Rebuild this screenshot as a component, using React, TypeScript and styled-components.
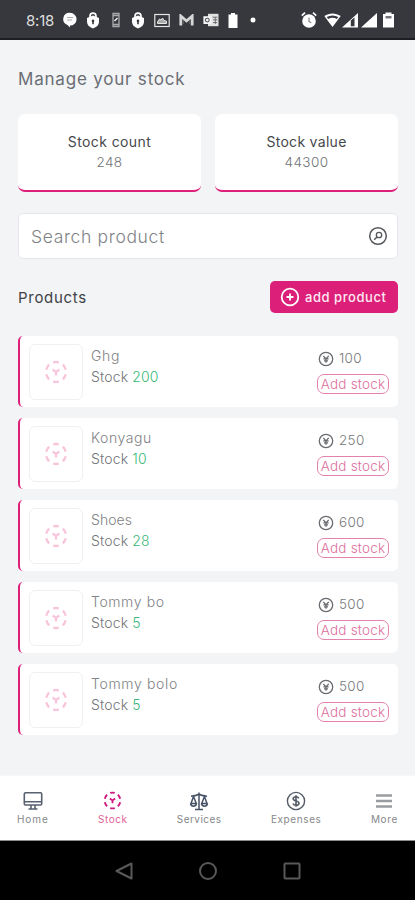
import React from "react";
import styled, { createGlobalStyle } from "styled-components";

const GlobalStyle = createGlobalStyle`
  * { box-sizing: border-box; }
  body { margin: 0; background: #f2f4f7; }
  body, button, input { font-family: Inter, "Open Sans", sans-serif; }
`;

const PINK = "#dc1f78";

const Screen = styled.div`
  width: 415px;
  height: 900px;
  display: flex;
  flex-direction: column;
  background: #f2f4f6;
  overflow: hidden;
`;

const Text = styled.span<{ $size: number; $color: string; $weight?: number; $track?: number; $line?: number }>`
  font-size: ${(p) => p.$size}px;
  color: ${(p) => p.$color};
  font-weight: ${(p) => p.$weight ?? 400};
  letter-spacing: ${(p) => p.$track ?? 0}px;
  line-height: ${(p) => p.$line ?? 21}px;
  white-space: nowrap;
`;

const StatusBar = styled.header`
  height: 40px;
  flex: none;
  display: flex;
  justify-content: space-between;
  padding: 0 20px 0 26px;
  background: #37383d;
  border-bottom: 2px solid #1d1d22;
`;

const StatusGroup = styled.div<{ $gap: number }>`
  display: flex;
  align-items: center;
  gap: ${(p) => p.$gap}px;
  padding-top: 2px;
  svg { display: block; }
`;

const Main = styled.main`
  flex: 1;
  display: flex;
  flex-direction: column;
  padding: 28px 17px 0 18px;
`;

const Summary = styled.section`
  display: grid;
  grid-template-columns: 1fr 1fr;
  gap: 14px;
  margin-top: 24px;
`;

const SummaryCard = styled.div`
  height: 78px;
  display: flex;
  flex-direction: column;
  align-items: center;
  padding-top: 17px;
  background: #fff;
  border-radius: 7px;
  border-bottom: 2px solid ${PINK};
`;

const SearchBox = styled.label`
  height: 46px;
  margin-top: 21px;
  padding: 0 9px 0 12px;
  display: flex;
  align-items: center;
  justify-content: space-between;
  background: #fff;
  border: 1px solid #e4e6e9;
  border-radius: 5px;
`;

const ListHeader = styled.div`
  display: flex;
  align-items: center;
  justify-content: space-between;
  margin-top: 22px;
`;

const AddButton = styled.button`
  width: 128px;
  height: 32px;
  display: flex;
  align-items: center;
  gap: 5px;
  padding: 0 0 0 10px;
  border: 0;
  border-radius: 5px;
  background: ${PINK};
`;

const ProductList = styled.ul`
  list-style: none;
  margin: 23px 0 0;
  padding: 0;
  display: flex;
  flex-direction: column;
  gap: 11px;
`;

const ProductRow = styled.li`
  height: 71px;
  display: flex;
  padding: 8px 9px 0 9px;
  background: #fff;
  border-left: 2px solid ${PINK};
  border-radius: 5px;
`;

const Thumb = styled.div`
  width: 54px;
  height: 56px;
  display: flex;
  align-items: center;
  justify-content: center;
  border: 1px solid #f0f0f2;
  border-radius: 6px;
`;

const Details = styled.div`
  flex: 1;
  display: flex;
  flex-direction: column;
  padding: 1px 0 0 8px;
`;

const PriceColumn = styled.div`
  width: 72px;
  display: flex;
  flex-direction: column;
  padding-top: 4px;
`;

const Price = styled.div`
  height: 21px;
  display: flex;
  align-items: center;
  gap: 5px;
  padding-left: 1px;
`;

const StockButton = styled.button`
  width: 72px;
  height: 20px;
  margin-top: 5px;
  padding: 0;
  display: flex;
  align-items: center;
  justify-content: center;
  background: #fff;
  border: 1px solid #e383ac;
  border-radius: 7px;
`;

const TabBar = styled.nav`
  height: 66px;
  flex: none;
  display: flex;
  justify-content: space-between;
  padding: 14px 17px 0;
  background: #fff;
  border-top: 1px solid #f6f7f9;
  border-bottom: 1px solid #8b8d8e;
`;

const Tab = styled.a`
  display: flex;
  flex-direction: column;
  align-items: center;
`;

const TabIcon = styled.span`
  height: 21px;
  display: flex;
  align-items: center;
`;

const SystemBar = styled.footer`
  height: 59px;
  flex: none;
  display: flex;
  align-items: center;
  justify-content: center;
  gap: 64px;
  background: #000;
`;

const CubeIcon = ({ size, color }: { size: number; color: string }) => (
  <svg width={size} height={size} viewBox="0 0 20 20" fill="none" stroke={color}>
    <circle cx="10" cy="10" r="8.300" strokeWidth="2" pathLength="60" strokeDasharray="5.600 4.400" strokeDashoffset="-2.200" />
    <path d="M7.200 7.900L10 9.900l2.800-2M10 9.500v3.500" strokeWidth="1.900" />
  </svg>
);

const PriceIcon = () => (
  <svg width="16" height="16" viewBox="0 0 16 16" fill="none" stroke="#686b70">
    <circle cx="8" cy="8" r="6.700" strokeWidth="1.300" />
    <path d="M5.300 4.800L8 8l2.700-3.200M8 8v3.800M5.400 7.800h5.200M6 9.800h4" strokeWidth="1.300" />
  </svg>
);

const SearchIcon = () => (
  <svg width="20" height="20" viewBox="0 0 20 20" fill="none" stroke="#55585c">
    <circle cx="10" cy="10" r="8.300" strokeWidth="1.500" />
    <circle cx="11" cy="9" r="2.700" strokeWidth="1.300" />
    <path d="M9 11l-2.800 2.800" strokeWidth="1.500" />
  </svg>
);

const LockIcon = () => (
  <svg width="14" height="17" viewBox="0 0 14 17">
    <path d="M4 6V4.200a3 3 0 016 0V6" fill="none" stroke="#fff" strokeWidth="1.700" />
    <path d="M7 3.600L13 6v4c0 3-2.500 5.200-6 6.500C3.500 15.200 1 13 1 10V6z" fill="#fff" />
    <path d="M7 7.500a1.400 1.400 0 01.8 2.500v2.300H6.200V10A1.400 1.400 0 017 7.500z" fill="#37383d" />
  </svg>
);

const NotificationIcons = () => (
  <>
    <svg width="14" height="16" viewBox="0 0 14 16">
      <path d="M7 .8a6.500 6.300 0 010 12.700v2L4.500 13A6.500 6.300 0 017 .8z" fill="#fff" />
      <path d="M4 5.500h6M4 8h5" stroke="#aaa" strokeWidth="1" />
    </svg>
    <LockIcon />
    <svg width="14" height="16" viewBox="0 0 14 16" fill="none" stroke="#a9aaad">
      <path d="M4 1.500h6v13H4zM4 3.500h6M4 12.500h6" strokeWidth="1.300" />
      <path d="M5.500 9l3-3" stroke="#fff" strokeWidth="1.300" />
    </svg>
    <LockIcon />
    <svg width="16" height="15" viewBox="0 0 16 15" fill="none" stroke="#e5e5e6">
      <rect x=".8" y="1.500" width="14.400" height="12" strokeWidth="1.200" />
      <path d="M3.500 10.500h9V8.200L10 7.400 8.500 5 7 7 5.500 6l-2 2.800z" fill="#aaa" strokeWidth="1" />
    </svg>
    <svg width="15" height="13" viewBox="0 0 15 13">
      <path d="M1.800 11.500V2l5.700 5 5.700-5v9.500" fill="none" stroke="#d6d6d7" strokeWidth="2.800" />
      <path d="M4.300 10V6.200M10.700 10V6.200" stroke="#66676b" strokeWidth="1" />
    </svg>
    <svg width="16" height="14" viewBox="0 0 16 14">
      <path d="M5 .8h10.500v12.400H5z" fill="#e2e2e3" />
      <path d="M.4 3.200h8v7.800h-8z" fill="#f4f4f4" />
      <circle cx="4.300" cy="7.100" r="1.900" fill="none" stroke="#55565a" strokeWidth="1.100" />
      <path d="M9.500 4.200h5M10 6.800h4.500M10 9.500h4M12.300 4v7" stroke="#66676b" strokeWidth=".9" />
    </svg>
    <svg width="10" height="15" viewBox="0 0 10 15">
      <path d="M3 0h4v1.500h2.500V15H.5V1.500H3z" fill="#fff" />
    </svg>
  </>
);

const SystemIcons = () => (
  <svg width="94" height="18" viewBox="0 0 94 18" fill="#fff">
    <circle cx="8" cy="10" r="6.800" />
    <path d="M.8 4.700L4 1.600M15.200 4.700L12 1.600" stroke="#fff" strokeWidth="1.700" />
    <path d="M8 6.500v4l2.300 1.400" fill="none" stroke="#77787b" strokeWidth="1.100" />
    <path d="M23.300 5.100c5.200-3.600 11.200-3.600 16.400 0L31.500 16z" />
    <path d="M25.700 5.900c3.700-2 7.900-2 11.600 0L35.800 8a9 9 0 00-8.600 0z" fill="#37383d" />
    <path d="M41 16.500L57 2v14.500z" />
    <path d="M49.800 9.500l3.700-3v8.800h-3.700z" fill="#37383d" />
    <path d="M60 16.500L76 2v14.500z" />
    <path d="M84.500 1.500h6V3H93v13.500H82V3h2.500z" />
    <path d="M84.500 5h6v2.500h-6z" fill="#77787b" />
  </svg>
);

const HomeIcon = () => (
  <svg width="20" height="20" viewBox="0 0 20 20" fill="none" stroke="#586170" strokeWidth="1.600">
    <rect x="1.300" y="1.800" width="17.400" height="12.200" rx="1.200" />
    <path d="M1.500 10.800h17M8 14v3.500M12 14v3.500M5.500 18h9" />
  </svg>
);

const ScalesIcon = () => (
  <svg width="20" height="20" viewBox="0 0 20 20" fill="none" stroke="#465266" strokeWidth="1.500">
    <path d="M10 1.500v17M6 18.500h8M2 5.300c3-.2 5.500-.8 8-2 2.500 1.200 5 1.800 8 2" />
    <path d="M4.500 5.500L2 12.500h5.300zM15.500 5.500L12.700 12.500H18z" />
    <path d="M1.500 12.500c.8 3.500 5.200 3.500 6 0M12.500 12.500c.8 3.500 5.200 3.500 6 0" />
  </svg>
);

const DollarIcon = () => (
  <svg width="20" height="20" viewBox="0 0 20 20" fill="none" stroke="#555b66" strokeWidth="1.400">
    <circle cx="10" cy="10" r="8.600" />
    <path d="M12.800 7.300c-.5-1-1.500-1.500-2.800-1.500-1.600 0-2.800.8-2.800 2s1 1.800 2.800 2.200 3 1 3 2.200-1.300 2-3 2c-1.500 0-2.600-.6-3-1.700M10 4.200v11.600" strokeWidth="1.600" />
  </svg>
);

const MenuIcon = () => (
  <svg width="20" height="20" viewBox="0 0 20 20" stroke="#9a9da0" strokeWidth="2.600">
    <path d="M2 4.500h16M2 10h16M2 15.500h16" />
  </svg>
);

const products = [
  { name: "Ghg", stock: 200, price: 100, track: 0.7 },
  { name: "Konyagu", stock: 10, price: 250, track: 0.55 },
  { name: "Shoes", stock: 28, price: 600, track: 0.05 },
  { name: "Tommy bo", stock: 5, price: 500, track: 0.6 },
  { name: "Tommy bolo", stock: 5, price: 500, track: 0.65 },
];

const tabs = [
  { label: "Home", icon: <HomeIcon />, color: "#85888b", track: 0.9 },
  { label: "Stock", icon: <CubeIcon size={19} color="#d0187d" />, color: "#e0669a", track: 0.5 },
  { label: "Services", icon: <ScalesIcon />, color: "#85888b", track: 0.45 },
  { label: "Expenses", icon: <DollarIcon />, color: "#85888b", track: 0.6 },
  { label: "More", icon: <MenuIcon />, color: "#85888b", track: 0.65 },
];

export default function App() {
  return (
    <Screen>
      <GlobalStyle />
      <StatusBar>
        <StatusGroup $gap={8.8}>
          <Text $size={15} $color="#dededf" $track={-0.2}>8:18</Text>
          <NotificationIcons />
          <svg width="10" height="8" viewBox="0 0 10 8"><circle cx="7" cy="4" r="2.500" fill="#fff" /></svg>
        </StatusGroup>
        <StatusGroup $gap={0}><SystemIcons /></StatusGroup>
      </StatusBar>
      <Main>
        <Text as="div" $size={17} $color="#6b6e74" $track={0.8} $line={22}>Manage your stock</Text>
        <Summary>
          <SummaryCard>
            <Text $size={14} $color="#46484b" $track={0.4}>Stock count</Text>
            <Text $size={13.5} $color="#707377" $track={0.4} $weight={300}>248</Text>
          </SummaryCard>
          <SummaryCard>
            <Text $size={14} $color="#46484b" $track={0.3}>Stock value</Text>
            <Text $size={13.5} $color="#707377" $track={0.4} $weight={300}>44300</Text>
          </SummaryCard>
        </Summary>
        <SearchBox>
          <Text $size={17.5} $color="#808386" $track={0.65} $weight={300}>Search product</Text>
          <SearchIcon />
        </SearchBox>
        <ListHeader>
          <Text $size={15} $color="#404246" $track={0.7} $line={23}>Products</Text>
          <AddButton>
            <svg width="20" height="20" viewBox="0 0 20 20" fill="none" stroke="#fff" strokeWidth="1.800">
              <circle cx="10" cy="10" r="8.300" />
              <path d="M10 6.500v7M6.500 10h7" />
            </svg>
            <Text $size={13} $color="#ffe9f3" $track={0.55} $weight={500}>add product</Text>
          </AddButton>
        </ListHeader>
        <ProductList>
          {products.map((p) => (
            <ProductRow key={p.name}>
              <Thumb><CubeIcon size={24} color="#f8c6dc" /></Thumb>
              <Details>
                <Text $size={14} $color="#808285" $track={p.track} $weight={300}>{p.name}</Text>
                <Text $size={14} $color="#737578" $track={0.15} $weight={300}>
                  Stock <Text $size={14} $color="#38b878" $track={0.1} $weight={300}>{p.stock}</Text>
                </Text>
              </Details>
              <PriceColumn>
                <Price>
                  <PriceIcon />
                  <Text $size={13.5} $color="#77797c" $track={0.3} $weight={300}>{p.price}</Text>
                </Price>
                <StockButton><Text $size={13.5} $color="#dc6e9c" $track={0.2} $weight={300} $line={18}>Add stock</Text></StockButton>
              </PriceColumn>
            </ProductRow>
          ))}
        </ProductList>
      </Main>
      <TabBar>
        {tabs.map((t) => (
          <Tab key={t.label}>
            <TabIcon>{t.icon}</TabIcon>
            <Text $size={10} $color={t.color} $track={t.track} $line={16}>{t.label}</Text>
          </Tab>
        ))}
      </TabBar>
      <SystemBar>
        <svg width="20" height="20" viewBox="0 0 20 20" fill="none" stroke="#58595b" strokeWidth="2"><path d="M17.500 2.500v15L2.500 10z" strokeLinejoin="round" /></svg>
        <svg width="20" height="20" viewBox="0 0 20 20" fill="none" stroke="#58595b" strokeWidth="2"><circle cx="10" cy="10" r="8" /></svg>
        <svg width="20" height="20" viewBox="0 0 20 20" fill="none" stroke="#58595b" strokeWidth="2"><rect x="2.500" y="2.500" width="15" height="15" rx="1" /></svg>
      </SystemBar>
    </Screen>
  );
}
